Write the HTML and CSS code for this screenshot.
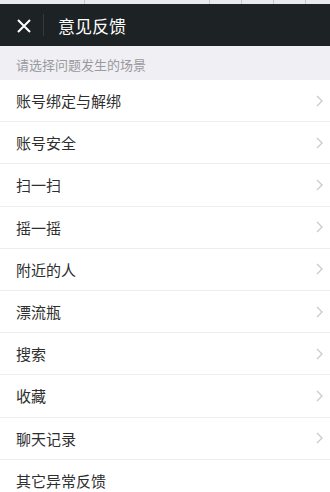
FILE: index.html
```html
<!DOCTYPE html>
<html lang="zh">
<head>
<meta charset="utf-8">
<link rel="stylesheet" href="styles.css">
</head>
<body>
<div class="strip">
  <span class="tick t1"></span><span class="tick t2"></span><span class="tick t3"></span><span class="tick t4"></span><span class="tick t5"></span>
</div>
<header class="bar">
  <svg class="close" width="16" height="16" viewBox="0 0 16 16"><path d="M2 2 L14 14 M14 2 L2 14" stroke="#fff" stroke-width="2" fill="none"/></svg>
  <span class="divider"></span>
  <span class="title">意见反馈</span>
</header>
<div class="section">请选择问题发生的场景</div>
<ul class="list">
  <li class="row"><span>账号绑定与解绑</span><svg class="chev" width="8" height="12" viewBox="0 0 8 12"><path d="M1 1 L6 6 L1 11" stroke="#cacace" stroke-width="1.3" fill="none"/></svg></li>
  <li class="row"><span>账号安全</span><svg class="chev" width="8" height="12" viewBox="0 0 8 12"><path d="M1 1 L6 6 L1 11" stroke="#cacace" stroke-width="1.3" fill="none"/></svg></li>
  <li class="row"><span>扫一扫</span><svg class="chev" width="8" height="12" viewBox="0 0 8 12"><path d="M1 1 L6 6 L1 11" stroke="#cacace" stroke-width="1.3" fill="none"/></svg></li>
  <li class="row"><span>摇一摇</span><svg class="chev" width="8" height="12" viewBox="0 0 8 12"><path d="M1 1 L6 6 L1 11" stroke="#cacace" stroke-width="1.3" fill="none"/></svg></li>
  <li class="row"><span>附近的人</span><svg class="chev" width="8" height="12" viewBox="0 0 8 12"><path d="M1 1 L6 6 L1 11" stroke="#cacace" stroke-width="1.3" fill="none"/></svg></li>
  <li class="row"><span>漂流瓶</span><svg class="chev" width="8" height="12" viewBox="0 0 8 12"><path d="M1 1 L6 6 L1 11" stroke="#cacace" stroke-width="1.3" fill="none"/></svg></li>
  <li class="row"><span>搜索</span><svg class="chev" width="8" height="12" viewBox="0 0 8 12"><path d="M1 1 L6 6 L1 11" stroke="#cacace" stroke-width="1.3" fill="none"/></svg></li>
  <li class="row"><span>收藏</span><svg class="chev" width="8" height="12" viewBox="0 0 8 12"><path d="M1 1 L6 6 L1 11" stroke="#cacace" stroke-width="1.3" fill="none"/></svg></li>
  <li class="row"><span>聊天记录</span><svg class="chev" width="8" height="12" viewBox="0 0 8 12"><path d="M1 1 L6 6 L1 11" stroke="#cacace" stroke-width="1.3" fill="none"/></svg></li>
  <li class="row"><span>其它异常反馈</span></li>
</ul>
</body>
</html>
```
FILE: styles.css
```css
* { box-sizing: border-box; }
html, body { margin: 0; padding: 0; background: #fff; }
body {
  width: 330px;
  height: 492px;
  overflow: hidden;
  font-family: "Noto Sans CJK SC", "Noto Sans", sans-serif;
}
.strip {
  position: relative;
  height: 4px;
  background: #e9eaec;
}
.tick {
  position: absolute;
  top: 0;
  width: 1px;
  height: 4px;
  background: #c6c8ca;
}
.t1 { left: 84px; }
.t2 { left: 209px; }
.t3 { left: 241px; }
.t4 { left: 273px; }
.t5 { left: 305px; }
.bar {
  height: 42px;
  background: #1d2225;
  display: flex;
  align-items: center;
  padding-left: 16px;
}
.close { display: block; margin-top: 1px; }
.divider {
  width: 1px;
  height: 22px;
  background: #353a3d;
  margin-left: 11px;
}
.title {
  margin-left: 14px;
  color: #fff;
  font-size: 17px;
  line-height: 1;
}
.section {
  height: 34px;
  background: #efeff4;
  color: #9a9a9e;
  font-size: 13px;
  display: flex;
  align-items: center;
  padding-left: 16px;
  padding-top: 2px;
}
.list {
  list-style: none;
  margin: 0;
  padding: 0;
}
.row {
  height: 42.2px;
  display: flex;
  align-items: center;
  justify-content: space-between;
  padding: 0 6px 0 16px;
  color: #2e2e2e;
  font-size: 15px;
  border-bottom: 1px solid #ededed;
}
.row:last-child { border-bottom: none; }
.chev { display: block; }
```
